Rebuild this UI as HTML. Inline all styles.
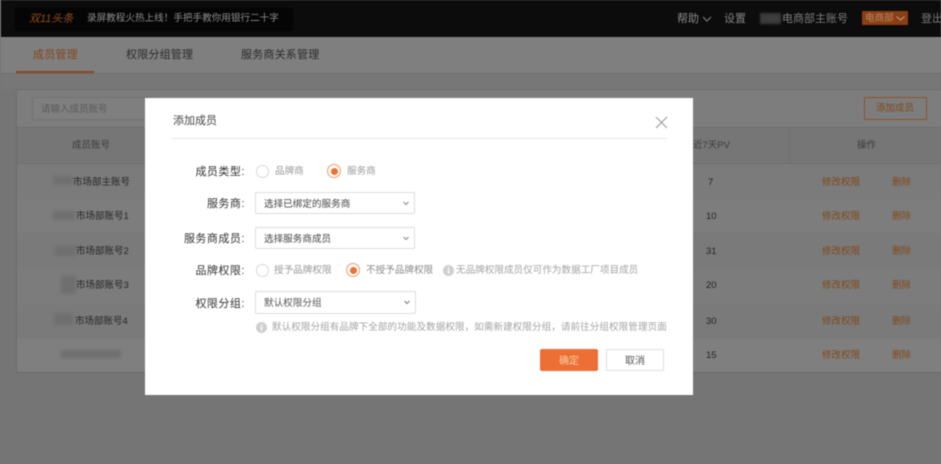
<!DOCTYPE html>
<html lang="zh">
<head>
<meta charset="utf-8">
<style>
html,body{margin:0;padding:0;width:941px;height:464px;overflow:hidden;background:#757575}
body{font-family:"Liberation Sans","Noto Sans CJK SC",sans-serif;position:relative}
#w{position:absolute;left:0;top:0;width:941px;height:464px;overflow:hidden;filter:blur(.4px)}
.a{position:absolute}
.t{position:absolute;white-space:nowrap;line-height:16px}
.sel{position:absolute;background:#fff;border:1px solid #dcdcdc;border-radius:2px;box-sizing:border-box;height:22px;width:160px;font-size:9.6px;color:#444;line-height:23px;padding-left:8px;white-space:nowrap}
.sel svg{position:absolute;right:3px;top:6px}
.r{position:absolute;width:13px;height:13px;border-radius:50%;border:1px solid #d8d8d8;box-sizing:border-box;background:#fff}
.r.on{width:14px;height:14px;border:1px solid #ef9a66}
.r.on:after{content:"";position:absolute;left:2.5px;top:2.5px;width:7px;height:7px;border-radius:50%;background:#ee6f2f}
.row{position:absolute;left:17px;width:924px;height:35px}
.rn{position:absolute;top:10px;font-size:9.5px;color:#262626;line-height:16px;white-space:nowrap}
.ro{position:absolute;top:10px;font-size:9.5px;color:#80491a;line-height:16px;white-space:nowrap}
.bl{position:absolute;background:#6f6f6f;filter:blur(1.5px)}
.l{position:absolute;font-size:11px;letter-spacing:.5px;color:#333;line-height:16px;text-align:right;white-space:nowrap;width:100px;left:145px}
.g{font-size:9.6px;color:#a3a3a3}
</style>
</head>
<body>
<div id="w">
<!-- header -->
<div class="a" style="left:1px;top:0;width:940px;height:37px;background:#0c0c0c"></div>
<div class="a" style="left:15px;top:8px;width:278px;height:23px;background:#050505;border-radius:2px"></div>
<div class="t" style="left:29px;top:11px;font-size:11px;font-style:italic;color:#8e4a1e">双11头条</div>
<div class="t" style="left:87px;top:11px;font-size:9.6px;color:#8c8c8c">录屏教程火热上线！手把手教你用银行二十字</div>
<div class="t" style="left:677px;top:11px;font-size:11px;color:#8a8a8a">帮助</div>
<svg class="a" style="left:702px;top:16px" width="10" height="6" viewBox="0 0 10 6"><path d="M1 1l4 4 4-4" fill="none" stroke="#858585" stroke-width="1"/></svg>
<div class="t" style="left:724px;top:11px;font-size:11px;color:#858585">设置</div>
<div class="a" style="left:760px;top:13px;width:21px;height:11px;background:#3c3c3c;filter:blur(1px)"></div>
<div class="t" style="left:782px;top:11px;font-size:11px;color:#7d7d7d">电商部主账号</div>
<div class="a" style="left:862px;top:11px;width:46px;height:14px;background:#8a3f14;border-radius:1px"></div>
<div class="t" style="left:865px;top:11px;font-size:9.6px;color:#b98a6c">电商部</div>
<svg class="a" style="left:896px;top:16px" width="9" height="5" viewBox="0 0 9 5"><path d="M.5.5l4 3.5 4-3.5" fill="none" stroke="#c0a08c" stroke-width="1"/></svg>
<div class="t" style="left:921px;top:11px;font-size:11px;color:#7d7d7d">登出</div>

<!-- tabs -->
<div class="a" style="left:1px;top:37px;width:940px;height:36px;background:#7f7f7f;border-bottom:1px solid #6e6e6e"></div>
<div class="t" style="left:33px;top:47px;font-size:11px;color:#83461c;letter-spacing:.2px">成员管理</div>
<div class="t" style="left:126px;top:47px;font-size:11px;color:#2b2b2b;letter-spacing:.2px">权限分组管理</div>
<div class="t" style="left:241px;top:47px;font-size:11px;color:#2b2b2b;letter-spacing:.2px">服务商关系管理</div>
<div class="a" style="left:16px;top:71px;width:78px;height:2px;background:#8b481c"></div>

<!-- main panel -->
<div class="a" style="left:1px;top:74px;width:940px;height:16px;background:#777"></div>
<div class="a" style="left:16px;top:89px;width:925px;height:284px;background:#7d7d7d;border-left:1px solid #6c6c6c;border-top:1px solid #6e6e6e;border-bottom:1px solid #676767;box-sizing:border-box"></div>
<div class="a" style="left:32px;top:97px;width:120px;height:23px;border:1px solid #727272;background:#7f7f7f;box-sizing:border-box"></div>
<div class="t" style="left:41px;top:102px;font-size:9.5px;color:#5a5a5a">请输入成员账号</div>
<div class="a" style="left:864px;top:97px;width:63px;height:23px;border:1px solid #8b5326;border-radius:2px;box-sizing:border-box"></div>
<div class="t" style="left:876px;top:101px;font-size:9.5px;color:#80491a">添加成员</div>

<!-- table head -->
<div class="a" style="left:17px;top:127px;width:924px;height:37px;background:#767676;border-top:1px solid #6f6f6f;border-bottom:1px solid #6d6d6d;box-sizing:border-box"></div>
<div class="a" style="left:789px;top:127px;width:1px;height:245px;background:#6d6d6d"></div>
<div class="t" style="left:72px;top:138px;font-size:9.5px;color:#3c3c3c">成员账号</div>
<div class="t" style="left:693px;top:138px;font-size:9.5px;color:#3c3c3c">近7天PV</div>
<div class="t" style="left:857px;top:138px;font-size:9.5px;color:#3c3c3c">操作</div>

<!-- rows -->
<div class="row" style="top:164px;background:#7b7b7b"><div class="bl" style="left:36px;top:12px;width:20px;height:9px"></div><div class="rn" style="left:56px;top:9px;top:10.5px">市场部主账号</div><div class="rn" style="left:691px;top:10.5px">7</div><div class="ro" style="left:805px;top:10.5px">修改权限</div><div class="ro" style="left:875px;top:10.5px">删除</div></div>
<div class="row" style="top:199px;background:#7d7d7d"><div class="bl" style="left:36px;top:12px;width:22px;height:9px"></div><div class="rn" style="left:59px">市场部账号1</div><div class="rn" style="left:689px">10</div><div class="ro" style="left:805px">修改权限</div><div class="ro" style="left:875px">删除</div></div>
<div class="row" style="top:233px;height:36px;background:#7a7a7a"><div class="bl" style="left:38px;top:13px;width:21px;height:10px"></div><div class="rn" style="left:59px;top:10.5px">市场部账号2</div><div class="rn" style="left:689px;top:10.5px">31</div><div class="ro" style="left:805px;top:10.5px">修改权限</div><div class="ro" style="left:875px;top:10.5px">删除</div></div>
<div class="row" style="top:269px;background:#7c7c7c"><div class="bl" style="left:44px;top:7px;width:15px;height:18px"></div><div class="rn" style="left:59px;top:9px">市场部账号3</div><div class="rn" style="left:689px;top:9px">20</div><div class="ro" style="left:805px;top:9px">修改权限</div><div class="ro" style="left:875px;top:9px">删除</div></div>
<div class="row" style="top:304px;background:#7a7a7a"><div class="bl" style="left:37px;top:9px;width:19px;height:12px"></div><div class="rn" style="left:58px;top:9.5px">市场部账号4</div><div class="rn" style="left:689px;top:9.5px">30</div><div class="ro" style="left:805px;top:9.5px">修改权限</div><div class="ro" style="left:875px;top:9.5px">删除</div></div>
<div class="row" style="top:339px;height:33px;background:#7f7f7f"><div class="bl" style="left:44px;top:11px;width:60px;height:8px"></div><div class="rn" style="left:689px;top:8.5px">15</div><div class="ro" style="left:805px;top:8.5px">修改权限</div><div class="ro" style="left:875px;top:8.5px">删除</div></div>

<!-- dialog -->
<div class="a" style="left:145px;top:98px;width:548px;height:297px;background:#fff"></div>
<div class="t" style="left:173px;top:113px;font-size:11px;color:#444">添加成员</div>
<div class="a" style="left:172px;top:138px;width:495px;height:1px;background:#e6e6e6"></div>
<svg class="a" style="left:655px;top:116px" width="13" height="13" viewBox="0 0 13 13"><path d="M1 1l11 11M12 1L1 12" fill="none" stroke="#9a9a9a" stroke-width="1.1"/></svg>

<div class="l" style="top:164px">成员类型:</div>
<div class="r" style="left:256px;top:165px"></div>
<div class="t g" style="left:275px;top:164px;color:#999">品牌商</div>
<div class="r on" style="left:327px;top:164px"></div>
<div class="t g" style="left:347px;top:164px;color:#999">服务商</div>

<div class="l" style="top:196px">服务商:</div>
<div class="sel" style="left:255px;top:192px">选择已绑定的服务商<svg width="10" height="8" viewBox="0 0 10 8"><path d="M2.5 3l2.5 2.5L7.5 3" fill="none" stroke="#888" stroke-width="1"/></svg></div>

<div class="l" style="top:231px">服务商成员:</div>
<div class="sel" style="left:255px;top:227px">选择服务商成员<svg width="10" height="8" viewBox="0 0 10 8"><path d="M2.5 3l2.5 2.5L7.5 3" fill="none" stroke="#888" stroke-width="1"/></svg></div>

<div class="l" style="top:263px">品牌权限:</div>
<div class="r" style="left:256px;top:264px"></div>
<div class="t g" style="left:274px;top:263px;color:#999">授予品牌权限</div>
<div class="r on" style="left:346px;top:263px"></div>
<div class="t g" style="left:366px;top:263px;color:#888">不授予品牌权限</div>
<svg class="a" style="left:443px;top:265px" width="11" height="11" viewBox="0 0 11 11"><circle cx="5.5" cy="5.5" r="5.5" fill="#cfcfcf"/><rect x="4.8" y="4.6" width="1.5" height="4" fill="#fff"/><rect x="4.8" y="2.4" width="1.5" height="1.4" fill="#fff"/></svg>
<div class="t g" style="left:456px;top:263px">无品牌权限成员仅可作为数据工厂项目成员</div>

<div class="l" style="top:296px">权限分组:</div>
<div class="sel" style="left:255px;top:291px;width:161px;height:23px;line-height:23px;color:#555">默认权限分组<svg width="10" height="8" viewBox="0 0 10 8"><path d="M2.5 3l2.5 2.5L7.5 3" fill="none" stroke="#777" stroke-width="1"/></svg></div>

<svg class="a" style="left:256px;top:322px" width="11" height="11" viewBox="0 0 11 11"><circle cx="5.5" cy="5.5" r="5.5" fill="#cfcfcf"/><rect x="4.8" y="4.6" width="1.5" height="4" fill="#fff"/><rect x="4.8" y="2.4" width="1.5" height="1.4" fill="#fff"/></svg>
<div class="t g" style="left:272px;top:320px;font-size:9.5px;letter-spacing:.13px">默认权限分组有品牌下全部的功能及数据权限，如需新建权限分组，请前往分组权限管理页面</div>

<div class="a" style="left:540px;top:349px;width:58px;height:22px;background:#ec6f35;border-radius:2px"></div>
<div class="t" style="left:540px;top:353.5px;width:58px;text-align:center;font-size:10px;color:#fbd0a8">确定</div>
<div class="a" style="left:606px;top:349px;width:58px;height:22px;background:#fff;border:1px solid #dedede;border-radius:1px;box-sizing:border-box"></div>
<div class="t" style="left:606px;top:353.5px;width:58px;text-align:center;font-size:10px;color:#555">取消</div>
</div>
</body>
</html>
